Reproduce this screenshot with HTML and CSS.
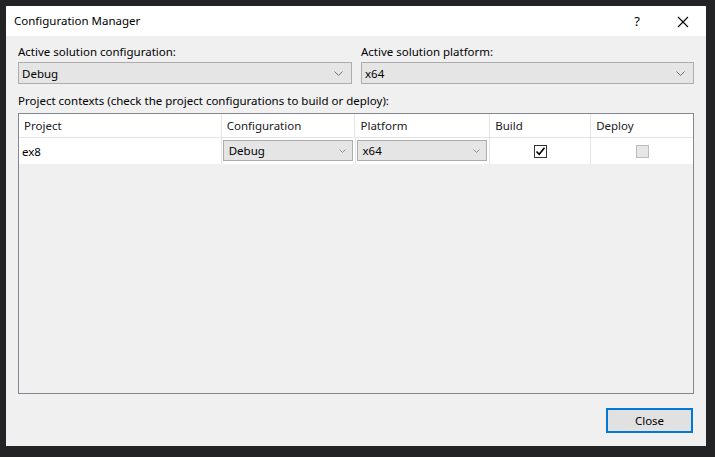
FILE: index.html
```html
<!DOCTYPE html>
<html lang="en">
<head>
  <meta charset="UTF-8" />
  <title>Configuration Manager</title>
  <link rel="stylesheet" href="styles.css">
</head>
<body>
  <div class="window">
    <div class="titlebar">
      <span class="title">Configuration Manager</span>
      <span class="help">?</span>
      <span class="close-x">
        <svg width="12" height="12" viewBox="0 0 12 12"><path d="M1 1L11 11M11 1L1 11" stroke="#000" stroke-width="1.1" fill="none"/></svg>
      </span>
    </div>

    <div class="content">
      <div class="top-row">
        <div class="field">
          <label>Active solution configuration:</label>
          <div class="combo">
            <span>Debug</span>
            <svg class="chev" width="9" height="5" viewBox="0 0 9 5"><path d="M0.5 0.5L4.5 4.5L8.5 0.5" stroke="#707070" fill="none"/></svg>
          </div>
        </div>
        <div class="field">
          <label>Active solution platform:</label>
          <div class="combo">
            <span>x64</span>
            <svg class="chev" width="9" height="5" viewBox="0 0 9 5"><path d="M0.5 0.5L4.5 4.5L8.5 0.5" stroke="#707070" fill="none"/></svg>
          </div>
        </div>
      </div>

      <div class="contexts-label">Project contexts (check the project configurations to build or deploy):</div>

      <div class="grid">
        <div class="grid-row header">
          <div class="cell c-project">Project</div>
          <div class="cell c-config">Configuration</div>
          <div class="cell c-platform">Platform</div>
          <div class="cell c-build">Build</div>
          <div class="cell c-deploy">Deploy</div>
        </div>
        <div class="grid-row data">
          <div class="cell c-project">ex8</div>
          <div class="cell c-config">
            <div class="cell-combo">
              <span>Debug</span>
              <svg class="chev-sm" width="7" height="4" viewBox="0 0 7 4"><path d="M0.5 0.5L3.5 3.5L6.5 0.5" stroke="#909090" fill="none"/></svg>
            </div>
          </div>
          <div class="cell c-platform">
            <div class="cell-combo">
              <span>x64</span>
              <svg class="chev-sm" width="7" height="4" viewBox="0 0 7 4"><path d="M0.5 0.5L3.5 3.5L6.5 0.5" stroke="#909090" fill="none"/></svg>
            </div>
          </div>
          <div class="cell c-build center">
            <div class="check on">
              <svg width="11" height="11" viewBox="0 0 11 11"><path d="M1.5 5.5L4.2 8.3L9.5 1.8" stroke="#000" stroke-width="1.6" fill="none"/></svg>
            </div>
          </div>
          <div class="cell c-deploy center">
            <div class="check disabled"></div>
          </div>
        </div>
      </div>

      <div class="buttons">
        <button class="btn-close">Close</button>
      </div>
    </div>
  </div>
</body>
</html>
```

FILE: styles.css
```css
body {
  margin: 0;
  padding: 6px;
  background-color: #232326;
  font-family: "Noto Sans", "Open Sans", sans-serif;
  font-size: 11.5px;
  color: #000;
}
.window {
  width: 700px;
  height: 440px;
  background: #f0f0f0;
  display: flex;
  flex-direction: column;
}
.titlebar {
  height: 30px;
  background: #fff;
  display: flex;
  align-items: center;
}
.title {
  flex: 1;
  padding-left: 8px;
  padding-bottom: 1px;
}
.help {
  width: 46px;
  text-align: center;
  font-size: 13px;
}
.close-x {
  width: 46px;
  display: flex;
  justify-content: center;
  padding-top: 1px;
}
.content {
  flex: 1;
  padding: 8px 12px 13px 12px;
  display: flex;
  flex-direction: column;
}
.top-row {
  display: flex;
  gap: 9px;
}
.field {
  display: flex;
  flex-direction: column;
}
.field:first-child {
  width: 334px;
}
.field:last-child {
  width: 333px;
}
.field label {
  height: 18px;
  line-height: 16px;
}
.combo {
  height: 20px;
  border: 1px solid #acacac;
  background: #e5e5e5;
  display: flex;
  align-items: center;
  padding: 0 5px 0 3px;
}
.combo span {
  flex: 1;
}
.chev {
  margin-right: 3px;
}
.contexts-label {
  margin-top: 9px;
  height: 20px;
  line-height: 16px;
}
.grid {
  height: 279px;
  border: 1px solid #828790;
  background: #f0f0f0;
}
.grid-row {
  display: flex;
  background: #fff;
}
.grid-row.header {
  height: 23px;
  border-bottom: 1px solid #e5e5e5;
}
.grid-row.data {
  height: 26px;
}
.cell {
  display: flex;
  align-items: center;
  border-right: 1px solid #e5e5e5;
  box-sizing: border-box;
}
.header .cell {
  padding-left: 5px;
  color: #202020;
}
.data .c-project {
  padding-left: 3px;
}
.c-project { width: 203px; }
.c-config { width: 134px; }
.c-platform { width: 135px; }
.c-build { width: 101px; }
.c-deploy { width: 102px; border-right: none; }
.data .c-config,
.data .c-platform {
  padding: 0 2px 1px 1px;
}
.cell-combo {
  flex: 1;
  height: 21px;
  border: 1px solid #acacac;
  background: #e5e5e5;
  display: flex;
  align-items: center;
  padding: 0 6px 0 5px;
  box-sizing: border-box;
}
.cell-combo span {
  flex: 1;
}
.center {
  justify-content: center;
}
.check {
  width: 13px;
  height: 13px;
  box-sizing: border-box;
  border: 1px solid #333;
  background: #fff;
  display: flex;
  align-items: center;
  justify-content: center;
}
.check.disabled {
  border-color: #bcbcbc;
  background: #e6e6e6;
}
.buttons {
  margin-top: auto;
  display: flex;
  justify-content: flex-end;
}
.btn-close {
  width: 87px;
  height: 25px;
  font-family: "Noto Sans", "Open Sans", sans-serif;
  font-size: 11.5px;
  background: #e1e1e1;
  border: 2px solid #0078d7;
  color: #000;
  margin-right: 1px;
}
```
